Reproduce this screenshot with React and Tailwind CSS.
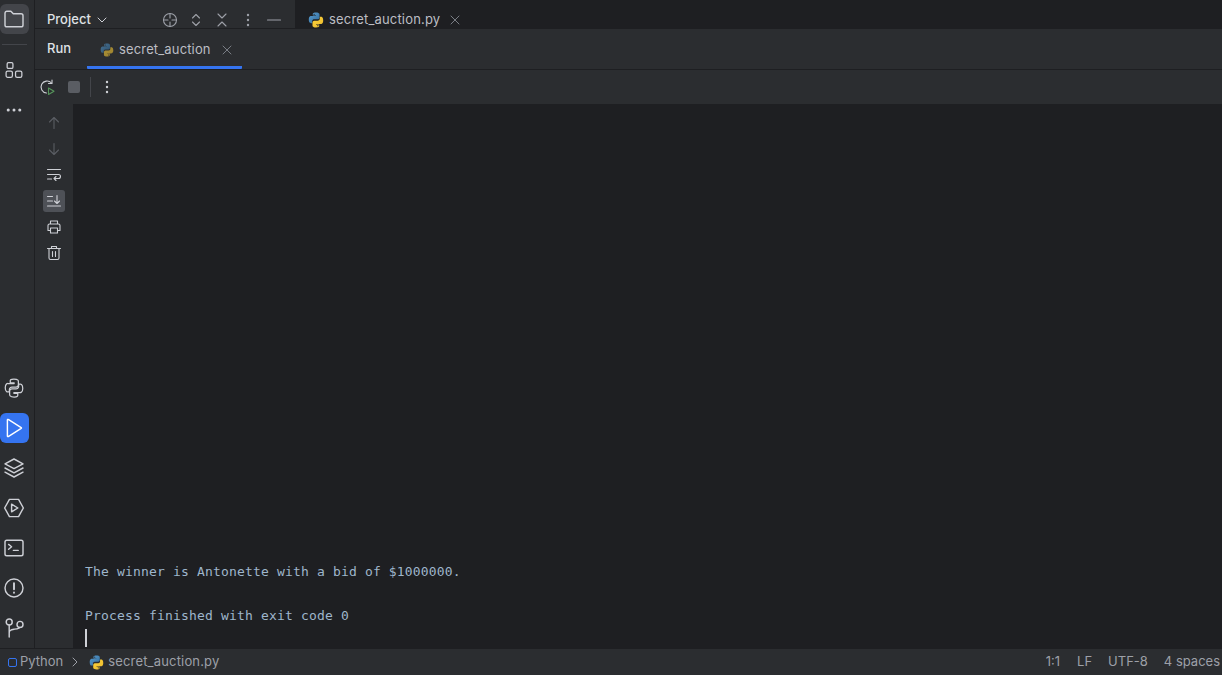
import { useId } from "react";

const ui = { fontFamily: "Inter, 'Noto Sans', sans-serif" };

const PythonIcon = ({ size = 16, dim = false }) => {
  const id = useId();
  return (
    <svg width={size} height={size} viewBox="0 0 16 16" className={dim ? "opacity-60 shrink-0" : "shrink-0"}>
      <defs>
        <linearGradient id={id + "a"} x1="0" y1="0" x2="1" y2="1">
          <stop offset="0" stopColor="#5a9fd4" />
          <stop offset="1" stopColor="#306998" />
        </linearGradient>
        <linearGradient id={id + "b"} x1="0" y1="0" x2="1" y2="1">
          <stop offset="0" stopColor="#ffd43b" />
          <stop offset="1" stopColor="#e8b92e" />
        </linearGradient>
      </defs>
      <path
        fill={`url(#${id}a)`}
        d="M7.9.6C4.6.6 4.8 2 4.8 2v1.6H8v.5H3.2S.8 3.8.8 7.6s2.1 3.6 2.1 3.6h1.3V9.4s-.1-2.1 2.1-2.1h3.2s2 0 2-1.9V2.6S11.8.6 7.9.6zM6.1 1.7a.6.6 0 1 1 0 1.2.6.6 0 0 1 0-1.2z"
      />
      <path
        fill={`url(#${id}b)`}
        d="M8.1 15.4c3.3 0 3.1-1.4 3.1-1.4v-1.6H8v-.5h4.8s2.4.3 2.4-3.5-2.1-3.6-2.1-3.6h-1.3v1.8s.1 2.1-2.1 2.1H6.5s-2 0-2 1.9v2.8s-.3 2 3.6 2zm1.8-1.1a.6.6 0 1 1 0-1.2.6.6 0 0 1 0 1.2z"
      />
    </svg>
  );
};

const Ico = ({ children, size = 24, box = 20, color = "#ced0d6", sw = 1.2 }) => (
  <svg width={size} height={size} viewBox={`0 0 ${box} ${box}`} fill="none" stroke={color} strokeWidth={sw} strokeLinecap="round" strokeLinejoin="round" className="shrink-0">
    {children}
  </svg>
);

const CloseIcon = () => (
  <Ico size={10} box={10} color="#7a7e85" sw={1}>
    <path d="M1 1l8 8M9 1l-8 8" />
  </Ico>
);

const RailButton = ({ children, active, selected }) => (
  <div
    className={`w-[29px] h-[30px] pr-px rounded-md flex items-center justify-center ${
      active ? "bg-[#3574f0]" : selected ? "bg-[#43454a]" : ""
    }`}
  >
    {children}
  </div>
);

const SideButton = ({ children, selected }) => (
  <div className={`w-[22px] h-[22px] rounded-[3px] flex items-center justify-center ${selected ? "bg-[#4e5157]" : ""}`}>
    {children}
  </div>
);

function LeftRail() {
  return (
    <div className="w-[35px] shrink-0 bg-[#2b2d30] border-r border-[#1e1f22] flex flex-col items-start">
      <div className="pt-1 flex flex-col items-start">
        <RailButton selected>
          <Ico>
            <path d="M2.500 5.200c0-.9.7-1.700 1.600-1.700h3.300l2 2.200h6.500c.9 0 1.600.7 1.600 1.600v7.600c0 .9-.7 1.600-1.600 1.600H4.100c-.9 0-1.600-.7-1.600-1.600z" />
          </Ico>
        </RailButton>
        <div className="w-[25px] h-px bg-[#43454a] ml-[2px] mt-[10px] mb-[10px]" />
        <RailButton>
          <Ico size={21}>
            <rect x="3" y="2.500" width="5.500" height="5.500" rx="1.200" />
            <rect x="2" y="10.500" width="6" height="6" rx="1.500" />
            <rect x="11" y="10.500" width="6" height="6" rx="1.500" />
          </Ico>
        </RailButton>
        <div className="mt-[10px]">
          <RailButton>
            <svg width="16" height="4" viewBox="0 0 18 4" fill="#ced0d6">
              <circle cx="2.500" cy="2" r="1.700" />
              <circle cx="9" cy="2" r="1.700" />
              <circle cx="15.500" cy="2" r="1.700" />
            </svg>
          </RailButton>
        </div>
      </div>

      <div className="mt-auto flex flex-col items-start gap-[10px] pb-[5px]">
        <RailButton>
          <Ico size={20} box={16} sw={1}>
            <path d="M7.900.8C4.900.8 5 2.100 5 2.100v1.700h3.100v.6H3.200S1 4.100 1 7.700s2 3.400 2 3.400h1.300V9.400s-.1-2.100 2-2.100h3.300s1.900 0 1.900-1.900V2.700S11.700.8 7.900.8z" />
            <path d="M8.100 15.200c3 0 2.900-1.300 2.900-1.300v-1.700H7.900v-.6h4.900s2.200.3 2.200-3.300-2-3.400-2-3.400h-1.300v1.700s.1 2.100-2 2.100H6.400s-1.900 0-1.900 1.900v2.700s-.2 1.900 3.600 1.900z" />
          </Ico>
        </RailButton>
        <RailButton active>
          <Ico color="#ffffff">
            <path d="M4.500 3.300v13.400c0 .4.400.6.700.4l10.800-6.700c.3-.2.300-.6 0-.8L5.200 2.900c-.3-.2-.7 0-.7.4z" />
          </Ico>
        </RailButton>
        <RailButton>
          <Ico>
            <path d="M10 2.500l7.500 4L10 10.500l-7.500-4z" />
            <path d="M2.500 10L10 14l7.500-4" />
            <path d="M2.500 13.500l7.500 4 7.500-4" />
          </Ico>
        </RailButton>
        <RailButton>
          <Ico>
            <path d="M6.200 2.800h7.600l4 7.200-4 7.200H6.200l-4-7.200z" />
            <path d="M8 6.800v6.400l5.200-3.200z" />
          </Ico>
        </RailButton>
        <RailButton>
          <Ico>
            <rect x="2.500" y="3.500" width="15" height="13" rx="1.500" />
            <path d="M5.500 7l2.500 2-2.500 2M9.500 12h4" />
          </Ico>
        </RailButton>
        <RailButton>
          <Ico>
            <circle cx="10" cy="10" r="7.500" />
            <path d="M10 6v5M10 13.800v.1" strokeWidth="1.600" />
          </Ico>
        </RailButton>
        <RailButton>
          <Ico>
            <circle cx="6" cy="5" r="2.500" />
            <circle cx="15" cy="7" r="2.500" />
            <path d="M6 7.500V17.500M6 14c0-2 1-2.500 4-3 3-.5 5-.8 5-1.500" />
          </Ico>
        </RailButton>
      </div>
    </div>
  );
}

function TopBar() {
  return (
    <div className="h-[29px] flex shrink-0 border-b border-[#1e1f22]">
      <div className="w-[260px] bg-[#2b2d30] flex items-center pl-3 pt-[11px] text-[13px] font-medium text-[#dfe1e5]">
        <span>Project</span>
        <div className="ml-[6px]">
          <Ico size={10} box={10} color="#ced0d6" sw={1}>
            <path d="M1 3l4 4 4-4" />
          </Ico>
        </div>
        <div className="ml-[55px]">
          <Ico size={16} box={16} color="#9da0a8" sw={1.100}>
            <circle cx="8" cy="8" r="6.500" />
            <path d="M8 1.500V6M8 10v4.500M1.500 8H6M10 8h4.500" />
          </Ico>
        </div>
        <div className="ml-[10px]">
          <Ico size={16} box={16} color="#9da0a8" sw={1.100}>
            <path d="M4.500 6L8 2.500 11.500 6M4.500 10L8 13.500 11.500 10" />
          </Ico>
        </div>
        <div className="ml-[10px]">
          <Ico size={16} box={16} color="#9da0a8" sw={1.100}>
            <path d="M4 2l4 4 4-4M4 14l4-4 4 4" />
          </Ico>
        </div>
        <div className="ml-[10px]">
          <svg width="16" height="16" viewBox="0 0 16 16" fill="#9da0a8">
            <circle cx="8" cy="3" r="1.200" />
            <circle cx="8" cy="8" r="1.200" />
            <circle cx="8" cy="13" r="1.200" />
          </svg>
        </div>
        <div className="ml-[10px]">
          <Ico size={16} box={16} color="#9da0a8" sw={1.100}>
            <path d="M1.500 8h13" />
          </Ico>
        </div>
      </div>
      <div className="flex-1 bg-[#1e1f22] flex items-center pl-[13px] pt-[11px] text-[13px] tracking-[0.17px] text-[#bcbec4]">
        <PythonIcon />
        <span className="ml-[5px]">secret_auction.py</span>
        <div className="ml-[10px] flex">
          <CloseIcon />
        </div>
      </div>
    </div>
  );
}

function RunTabs() {
  return (
    <div className="h-[41px] shrink-0 bg-[#2b2d30] border-b border-[#1e1f22] flex text-[13px]">
      <div className="pl-3 w-[52px] flex items-center font-medium text-[#dfe1e5]">Run</div>
      <div className="w-[155px] flex items-center pl-[13px] border-b-[3px] border-[#3574f0] pt-[5px] rounded-b-[1px] tracking-[0.15px] text-[#bcbec4]">
        <PythonIcon size={14} dim />
        <span className="ml-[5px]">secret_auction</span>
        <div className="ml-[11px] flex">
          <CloseIcon />
        </div>
      </div>
    </div>
  );
}

function RunToolbar() {
  return (
    <div className="h-[34px] shrink-0 bg-[#2b2d30] flex items-center pl-[4px]">
      <svg width="16" height="16" viewBox="0 0 16 16" fill="none" strokeLinecap="round" strokeLinejoin="round" className="shrink-0">
        <path d="M7.500 14A6 6 0 1 1 12.500 4" stroke="#ced0d6" strokeWidth="1.100" />
        <path d="M13 1v3.500H9.500" stroke="#ced0d6" strokeWidth="1.100" />
        <path d="M9.500 9v6.500l5.500-3.200z" stroke="#57965c" strokeWidth="1.100" />
      </svg>
      <div className="w-3 h-3 rounded-[2px] bg-[#5a5d63] ml-[13px]" />
      <div className="w-px h-5 bg-[#43454a] ml-[10px]" />
      <div className="ml-2">
        <svg width="16" height="16" viewBox="0 0 16 16" fill="#ced0d6" className="shrink-0">
          <circle cx="8" cy="3" r="1.200" />
          <circle cx="8" cy="8" r="1.200" />
          <circle cx="8" cy="13" r="1.200" />
        </svg>
      </div>
    </div>
  );
}

function ConsoleSidebar() {
  return (
    <div className="w-[38px] shrink-0 bg-[#2b2d30] flex flex-col items-center pt-2 gap-1">
      <SideButton>
        <Ico size={16} box={16} color="#5a5d63" sw={1.100}>
          <path d="M8 2.500v11M3.500 7L8 2.500 12.500 7" />
        </Ico>
      </SideButton>
      <SideButton>
        <Ico size={16} box={16} color="#5a5d63" sw={1.100}>
          <path d="M8 2.500v11M3.500 9L8 13.500 12.500 9" />
        </Ico>
      </SideButton>
      <SideButton>
        <Ico size={16} box={16} sw={1.100}>
          <path d="M1.500 2.500h13M1.500 7.500h11c1.500 0 2 1 2 2s-.6 2-2 2H8M10 9.500l-2 2 2 2M1.500 12h4" />
        </Ico>
      </SideButton>
      <SideButton selected>
        <Ico size={16} box={16} sw={1.100}>
          <path d="M1.500 3.500h5M1.500 8h5M1.500 13h13M11 2.500v7.500M8.500 8l2.500 2.500L13.500 8" />
        </Ico>
      </SideButton>
      <SideButton>
        <Ico size={16} box={16} sw={1.100}>
          <path d="M4.500 5V2h7v3M4 11.500H2V6.500C2 5.700 2.500 5 3.500 5h9c1 0 1.500.7 1.500 1.500v5h-2" />
          <rect x="4.500" y="9" width="7" height="5" />
        </Ico>
      </SideButton>
      <SideButton>
        <Ico size={16} box={16} sw={1.100}>
          <path d="M1.500 3.500h13M5.500 3.500V1.500h5v2M3 3.500V13c0 1 .7 1.500 1.500 1.500h7c.8 0 1.500-.5 1.500-1.500V3.500M6.500 6.500v5M9.500 6.500v5" />
        </Ico>
      </SideButton>
    </div>
  );
}

function ConsoleOutput() {
  return (
    <div
      className="flex-1 bg-[#1e1f22] flex flex-col justify-end pl-3 text-[13px] leading-[22px] tracking-[0.17px] text-[#9fb6cc]"
      style={{ fontFamily: "'DejaVu Sans Mono', monospace" }}
    >
      <div>The winner is Antonette with a bid of $1000000.</div>
      <div className="h-[22px]" />
      <div>Process finished with exit code 0</div>
      <div className="h-[21px] flex items-center">
        <div className="w-[2px] h-[18px] bg-[#ced0d6]" />
      </div>
    </div>
  );
}

function StatusBar() {
  return (
    <div className="h-[27px] shrink-0 bg-[#2b2d30] border-t border-[#1e1f22] flex items-center text-[13px] text-[#9da0a8] pl-2">
      <div className="w-[9px] h-[9px] rounded-[2px] border border-[#3574f0]" />
      <span className="ml-[3px]">Python</span>
      <div className="ml-[7px] flex">
        <Ico size={10} box={10} color="#9da0a8" sw={1}>
          <path d="M3 1l4 4-4 4" />
        </Ico>
      </div>
      <div className="ml-[9px] flex">
        <PythonIcon size={15} />
      </div>
      <span className="ml-1 tracking-[0.17px]">secret_auction.py</span>
      <div className="ml-auto flex pr-[2px]">
        <span>1:1</span>
        <span className="ml-[17px]">LF</span>
        <span className="ml-4">UTF-8</span>
        <span className="ml-4">4 spaces</span>
      </div>
    </div>
  );
}

export default function App() {
  return (
    <div className="w-[1222px] h-[675px] flex flex-col overflow-hidden bg-[#1e1f22]" style={ui}>
      <div className="flex-1 flex min-h-0">
        <LeftRail />
        <div className="flex-1 flex flex-col min-w-0">
          <TopBar />
          <RunTabs />
          <RunToolbar />
          <div className="flex-1 flex min-h-0">
            <ConsoleSidebar />
            <ConsoleOutput />
          </div>
        </div>
      </div>
      <StatusBar />
    </div>
  );
}
